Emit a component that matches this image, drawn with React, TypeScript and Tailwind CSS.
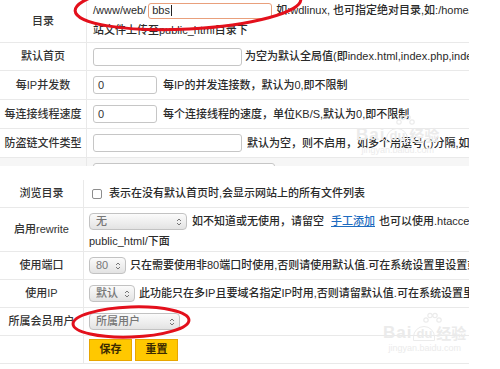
import React from 'react';

const font = "font-['Liberation_Sans','Noto_Sans_CJK_SC',sans-serif]";

function Arrows() {
  return (
    <svg width="6" height="10" viewBox="0 0 6 10" className="shrink-0">
      <path d="M1 4 L3 2 L5 4" fill="none" stroke="#777" strokeWidth="1" />
      <path d="M1 6 L3 8 L5 6" fill="none" stroke="#777" strokeWidth="1" />
    </svg>
  );
}

function Select({ label, className }: { label: string; className: string }) {
  return (
    <div
      className={`flex h-[17px] shrink-0 items-center justify-between rounded-[4px] border border-[#c2c2c2] bg-linear-to-b from-[#fbfbfb] to-[#e3e3e3] pr-[4px] pl-[6px] text-[#777] ${className}`}
    >
      <span>{label}</span>
      <Arrows />
    </div>
  );
}

function Input({ value, className }: { value?: string; className: string }) {
  return (
    <div
      className={`flex h-[18px] shrink-0 items-center rounded-[3px] border border-[#c6c6c6] bg-white px-[4px] text-[#333] ${className}`}
    >
      {value}
    </div>
  );
}

function TopRow({ label, h, children, bg = 'bg-white' }: { label: string; h: string; children: React.ReactNode; bg?: string }) {
  return (
    <div className={`flex border-b border-[#e9e9e9] ${h} ${bg}`}>
      <div className="flex w-[87px] shrink-0 items-center justify-center border-r border-[#e9e9e9] text-[11px] text-[#333]">
        {label}
      </div>
      <div className="flex min-w-0 flex-1 items-center overflow-hidden pl-[6px] whitespace-nowrap">{children}</div>
    </div>
  );
}

function BottomRow({ label, h, children }: { label: string; h: string; children: React.ReactNode }) {
  return (
    <div className={`flex border-b border-[#e9e9e9] ${h}`}>
      <div className="flex w-[84px] shrink-0 items-center justify-center border-r border-[#e9e9e9] text-[11px] text-[#333]">
        {label}
      </div>
      <div className="flex min-w-0 flex-1 items-center overflow-hidden pl-[5px] whitespace-nowrap">{children}</div>
    </div>
  );
}

function Watermark({ className }: { className: string }) {
  return (
    <div className={`pointer-events-none absolute flex flex-col items-center text-[#ebebeb] ${className}`}>
      <svg width="22" height="14" viewBox="0 0 22 14" className="mb-[-2px] ml-[14px]">
        <g fill="none" stroke="#ebebeb" strokeWidth="1.2">
          <circle cx="5" cy="8" r="2.2" />
          <circle cx="9" cy="3.5" r="2.2" />
          <circle cx="14" cy="3.5" r="2.2" />
          <circle cx="18" cy="8" r="2.2" />
        </g>
      </svg>
      <div className="flex items-end leading-none">
        <span className="text-[17px] font-bold tracking-[1px]">Bai</span>
        <span className="mx-[1px] rounded-t-full border border-[#ebebeb] px-[2px] text-[13px] font-bold">du</span>
        <span className="text-[15px] font-bold">经验</span>
      </div>
      <span className="mt-[3px] text-[9px] leading-none">jingyan.baidu.com</span>
    </div>
  );
}

export default function App() {
  return (
    <div className={`relative h-[369px] w-[500px] overflow-hidden bg-white text-[11px] font-medium text-[#2a2a2a] ${font}`}>
      {/* 上半部分 */}
      <div className="h-[166px] w-[469px] overflow-hidden">
        <TopRow label="目录" h="h-[43px]">
          <div className="flex flex-col self-start pt-[2px]">
            <div className="flex h-[17px] items-center">
              <span>/www/web/</span>
              <div className="ml-[2px] flex h-[16px] w-[124px] items-center rounded-[3px] border border-[#e9a07c] bg-white px-[3px]">
                bbs<span className="ml-px h-[11px] w-px bg-[#222]" />
              </div>
              <span className="ml-[4px]">如:wdlinux, 也可指定绝对目录,如:/home/wdlinux/bbs,网</span>
            </div>
            <div className="mt-[3px]">站文件上传至public_html目录下</div>
          </div>
        </TopRow>
        <TopRow label="默认首页" h="h-[28px]">
          <Input className="w-[149px]" />
          <span className="ml-[3px]">为空为默认全局值(即index.html,index.php,index.htm)</span>
        </TopRow>
        <TopRow label="每IP并发数" h="h-[29px]">
          <Input className="w-[64px]" value="0" />
          <span className="ml-[6px]">每IP的并发连接数，默认为0,即不限制</span>
        </TopRow>
        <TopRow label="每连接线程速度" h="h-[29px]">
          <Input className="w-[64px]" value="0" />
          <span className="ml-[6px]">每个连接线程的速度，单位KB/S,默认为0,即不限制</span>
        </TopRow>
        <TopRow label="防盗链文件类型" h="h-[29px]">
          <Input className="w-[149px]" />
          <span className="ml-[5px]">默认为空，则不启用，如多个用逗号(,)分隔,如jpg,gif</span>
        </TopRow>
        <div className="flex h-[40px] bg-[#f6f6f6]">
          <div className="w-[87px] shrink-0 border-r border-[#e9e9e9]" />
          <div className="flex items-start pt-[5px] pl-[6px] whitespace-nowrap">
            <Input className="w-[182px]" />
            <span className="mt-[8px] ml-[8px] text-[#555]">默认为空，则不启用，多个域名用逗号分隔</span>
          </div>
        </div>
      </div>

      {/* 下半部分 */}
      <div className="mt-[14px] w-[469px]">
        <BottomRow label="浏览目录" h="h-[28px]">
          <span className="mr-[7px] ml-[3px] h-[10px] w-[10px] shrink-0 rounded-[2px] border border-[#8d8d8d] bg-white" />
          <span>表示在没有默认首页时,会显示网站上的所有文件列表</span>
        </BottomRow>
        <BottomRow label="启用rewrite" h="h-[44px]">
          <div className="flex flex-col self-start pt-[5px]">
            <div className="flex items-center">
              <Select label="无" className="w-[98px]" />
              <span className="ml-[5px]">如不知道或无使用，请留空</span>
              <span className="ml-[7px] text-[#1d6cc0] underline">手工添加</span>
              <span className="ml-[4px]">也可以使用.htaccess, 请上传至</span>
            </div>
            <div className="mt-[3px]">public_html/下面</div>
          </div>
        </BottomRow>
        <BottomRow label="使用端口" h="h-[28px]">
          <Select label="80" className="w-[37px]" />
          <span className="ml-[4px]">只在需要使用非80端口时使用,否则请使用默认值.可在系统设置里设置或添加</span>
        </BottomRow>
        <BottomRow label="使用IP" h="h-[28px]">
          <Select label="默认" className="w-[46px]" />
          <span className="ml-[4px]">此功能只在多IP且要域名指定IP时用,否则请留默认值.可在系统设置里设置</span>
        </BottomRow>
        <BottomRow label="所属会员用户" h="h-[28px]">
          <Select label="所属用户" className="w-[91px]" />
        </BottomRow>
        <BottomRow label="" h="h-[28px]">
          <div className="flex gap-[3px]">
            <button className="h-[22px] w-[43px] border border-[#e8a600] bg-[#ffc800] text-[11px] font-bold text-[#3a2a00]">
              保存
            </button>
            <button className="h-[22px] w-[43px] border border-[#e8a600] bg-[#ffc800] text-[11px] font-bold text-[#3a2a00]">
              重置
            </button>
          </div>
        </BottomRow>
      </div>

      <Watermark className="top-[114px] left-[356px]" />
      <Watermark className="top-[312px] left-[383px]" />

      {/* 红色标注圈 */}
      <svg className="pointer-events-none absolute top-0 left-0" width="500" height="369">
        <ellipse cx="188" cy="5" rx="113" ry="24" transform="rotate(-3 188 5)" fill="none" stroke="#e3101c" strokeWidth="3" />
        <ellipse cx="131" cy="322" rx="58" ry="15" transform="rotate(-2 131 322)" fill="none" stroke="#e3101c" strokeWidth="3" />
      </svg>
    </div>
  );
}
